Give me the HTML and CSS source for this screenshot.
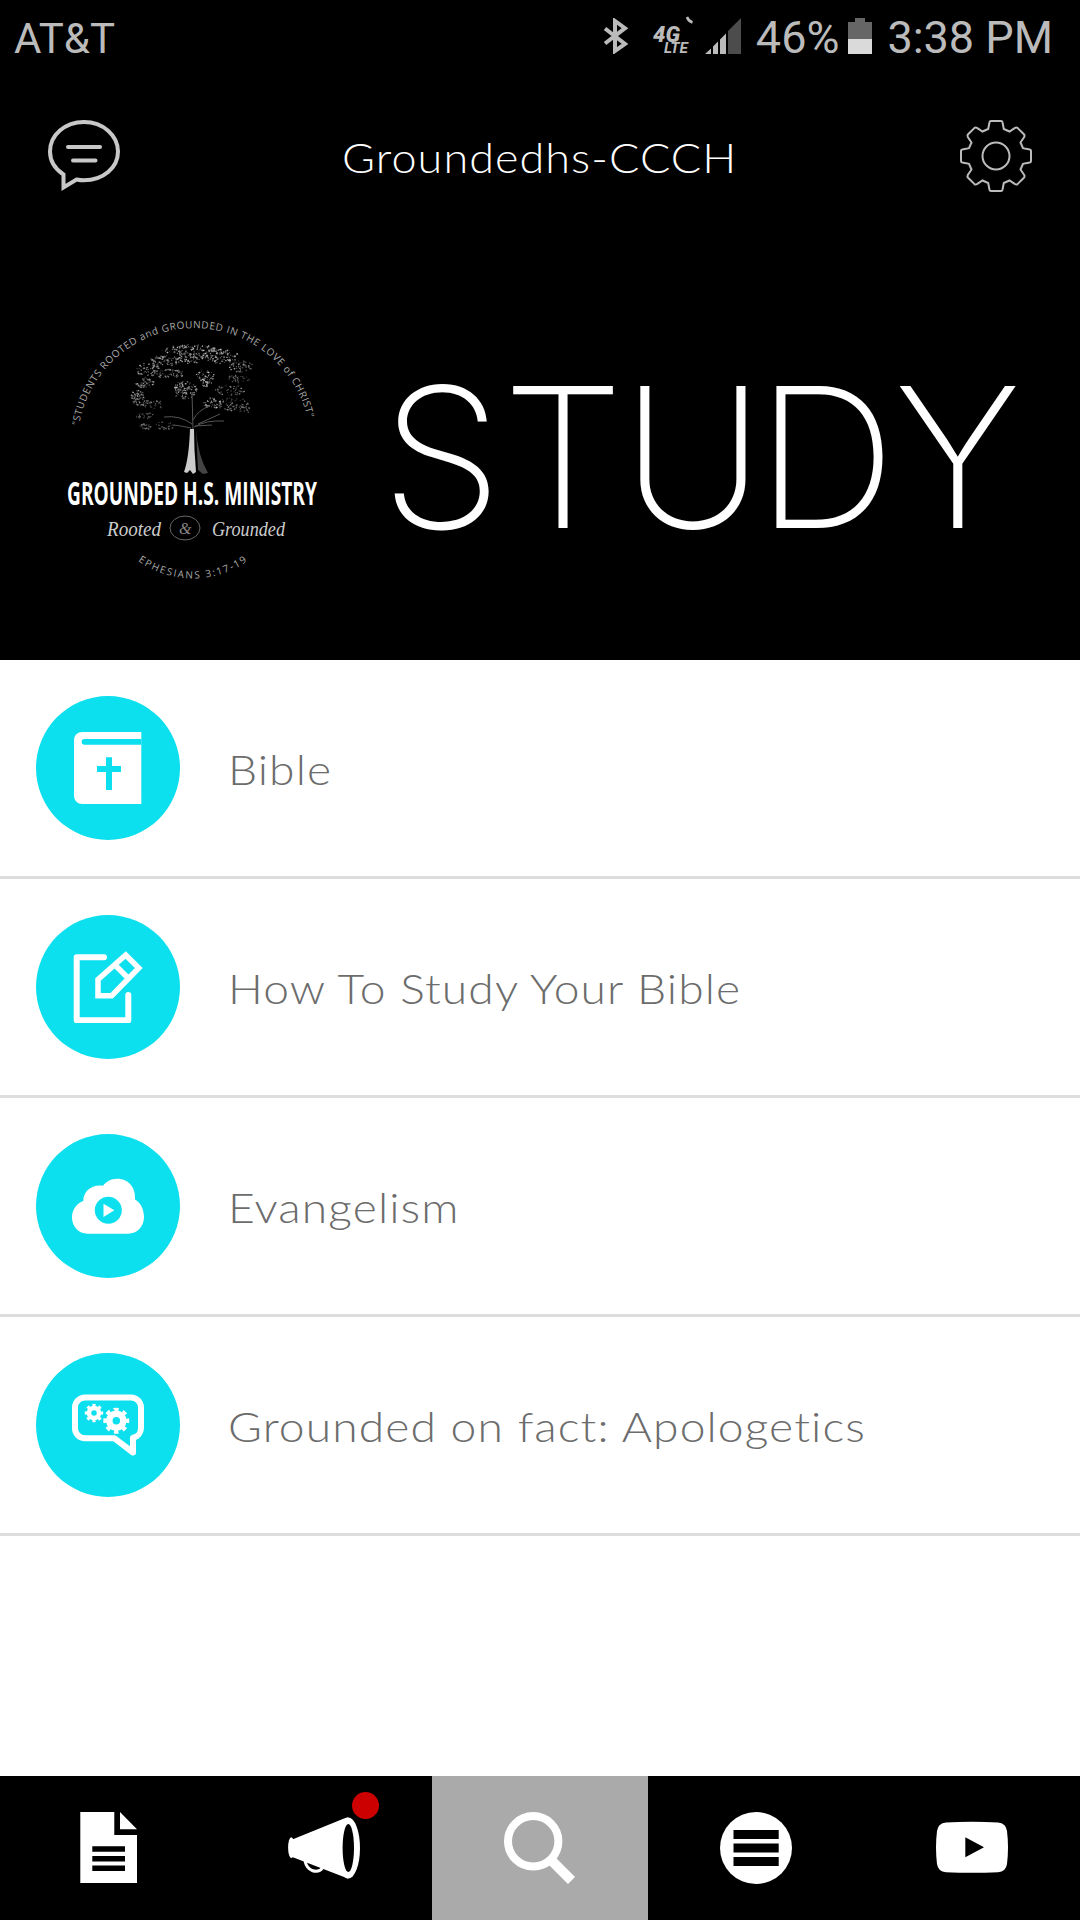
FILE: index.html
```html
<!DOCTYPE html>
<html lang="en">

<head>
    <meta charset="UTF-8">
    <meta name="viewport" content="width=device-width,initial-scale=1">
    <title>Groundedhs-CCCH</title>
    <link rel="stylesheet" href="styles.css">
</head>

<body>
    <div class="wrap">
        <div class="status">
            <span class="carrier">AT&amp;T</span>
            <svg class="bluetooth" width="26" height="36" viewBox="0 0 26 36">
                <path d="M2 10.500L22 26 12 33V3L22 10.200 2 25.500" />
            </svg>
            <svg class="network" width="42" height="40" viewBox="0 0 42 40">
                <text class="net-big" x="0" y="25.5" textLength="27" lengthAdjust="spacingAndGlyphs">4G</text>
                <text class="net-small" x="11" y="37" textLength="24" lengthAdjust="spacingAndGlyphs">LTE</text>
                <path d="M34 1c1 3 2.500 4.500 5.500 5.500" />
            </svg>
            <svg class="signal" width="36" height="36" viewBox="0 0 36 36">
                <path class="dim" d="M23 13L36 0V36H23z" />
                <path d="M0 36L6 30.500V36zM8 28.500L13 23.500V36H8zM15 21.500L21 15.500V36H15z" />
            </svg>
            <span class="percent">46%</span>
            <svg class="battery" width="24" height="36" viewBox="0 0 24 36">
                <path class="dim" d="M7 0H17V4H24V21H0V4H7z" />
                <path d="M0 21H24V36H0z" />
            </svg>
            <span class="time">3:38 PM</span>
        </div>

        <div class="navbar">
            <svg class="nav-icon chat" width="72" height="72" viewBox="0 0 72 72">
                <path d="M36 2C17 2 2 15 2 31.500c0 9.500 5 17.500 13.500 23V67.500l13-8c2.500.5 5 .8 7.500.8 19 0 34-12.500 34-28.800S55 2 36 2z" />
                <path d="M20 27H52M25 40.600H47.500" />
            </svg>
            <h1 class="title">Groundedhs-CCCH</h1>
            <svg class="nav-icon gear" width="72" height="72" viewBox="-36 -36 72 72">
                <defs>
                    <path id="quarter" d="M0-35H5Q6.300-35 6.500-33.800L7.800-27 13.500-24.500 19-28.200Q20.500-29 21.700-27.900L27.900-21.700Q29-20.500 28.200-19L24.500-13.500 27-7.800 33.800-6.500Q35-6.300 35-5V0" />
                </defs>
                <use href="#quarter" />
                <use href="#quarter" transform="rotate(90)" />
                <use href="#quarter" transform="rotate(180)" />
                <use href="#quarter" transform="rotate(270)" />
                <circle r="13.500" />
            </svg>
        </div>

        <div class="banner">
            <svg class="logo" width="300" height="300" viewBox="0 0 300 300">
                <defs>
                    <path id="arc-top" d="M39 126A116.500 116.500 0 0 1 269 126" />
                    <path id="arc-bottom" d="M98 261A95 95 0 0 0 209 260" />
                </defs>
                <text class="ring"><textPath href="#arc-top" textLength="320">"STUDENTS ROOTED and GROUNDED IN THE LOVE of CHRIST"</textPath></text>
                <g id="leaves"></g>
                <g class="branches">
                    <path d="M152 92L153 130M153 120Q158 110 170 106M152 124Q140 115 124 117M154 127Q166 120 184 121M151 128Q142 126 134 125M158 124L180 114M155 126L172 125" />
                </g>
                <path class="trunk" d="M150 129H154L154.500 150 156 172 153 174 150 170 147 173 144 172Q149 158 150 129z" />
                <path class="trunk-shade" d="M156 130Q158 156 168 173L163 174 158 170z" />
                <text class="ministry" x="27" y="205" textLength="250" lengthAdjust="spacingAndGlyphs">GROUNDED H.S. MINISTRY</text>
                <text class="script" x="67" y="236" textLength="54" lengthAdjust="spacingAndGlyphs">Rooted</text>
                <ellipse class="oval" cx="145" cy="228" rx="15" ry="12" />
                <text class="script amp" x="139" y="234">&amp;</text>
                <text class="script" x="172" y="236" textLength="73" lengthAdjust="spacingAndGlyphs">Grounded</text>
                <text class="ring"><textPath href="#arc-bottom" textLength="116">EPHESIANS 3:17-19</textPath></text>
            </svg>
            <svg class="heading" width="660" height="170" viewBox="0 0 660 170">
                <text x="1 122 242 376 514" y="148">STUDY</text>
            </svg>
        </div>

        <ul class="list">
            <li class="row">
                <span class="badge">
                    <svg width="72" height="72" viewBox="0 0 72 72">
                        <path class="fill" d="M10 0H69.300V72H10A8 8 0 0 1 2 64V8A8 8 0 0 1 10 0z" />
                        <path class="cut" d="M69.300 7H12.500a2.850 2.850 0 0 0 0 5.700H69.300zM34 25.300h6V34h9v6h-9v18h-6V40h-9v-6h9z" />
                    </svg>
                </span>
                <p>Bible</p>
            </li>
            <li class="row">
                <span class="badge">
                    <svg width="72" height="72" viewBox="0 0 72 72">
                        <path class="line" d="M32 6.300H4.700V69.300H56.300V44" />
                        <path class="line pencil" d="M53.700 4L66.800 17 39.700 44.700H26V28.500zM43.500 14.500L56 27" />
                    </svg>
                </span>
                <p>How To Study Your Bible</p>
            </li>
            <li class="row">
                <span class="badge">
                    <svg width="72" height="72" viewBox="0 0 72 72">
                        <path class="fill" d="M15.500 63.700C6.500 63.700 0 56.500 0 47.500 0 39.500 4.500 33.500 11.300 31 11.300 21.500 19.500 14 31 15.800 34 11.500 39 8.700 45.300 8.700 56 8.700 64 17 63 29.500 68.500 32.500 72 39 72 47.300 72 56.500 65 63.700 56.300 63.700z" />
                        <circle class="cut" cx="36.300" cy="40.300" r="13.500" />
                        <path class="fill" d="M31.500 33.800L42.300 40.300 31.500 47z" />
                    </svg>
                </span>
                <p>Evangelism</p>
            </li>
            <li class="row">
                <span class="badge">
                    <svg width="72" height="72" viewBox="0 0 72 72">
                        <path class="line" d="M13 8.500H59a10 10 0 0 1 10 10V39a10 10 0 0 1-8 9.800V63.500L42.500 49.300H13a10 10 0 0 1-10-10V18.500a10 10 0 0 1 10-10z" />
                        <g class="cog" transform="translate(22 24)">
                            <circle r="5" stroke-width="4.500" />
                            <circle r="7.500" stroke-width="3.500" pathLength="16" stroke-dasharray="1" transform="rotate(-11)" />
                        </g>
                        <g class="cog" transform="translate(44.300 31.700)">
                            <circle r="7" stroke-width="6.500" />
                            <circle r="11" stroke-width="4" pathLength="16" stroke-dasharray="1" transform="rotate(-11)" />
                        </g>
                    </svg>
                </span>
                <p>Grounded on fact: Apologetics</p>
            </li>
        </ul>

        <div class="tabs">
            <div class="tab">
                <svg width="72" height="72" viewBox="0 0 72 72">
                    <path d="M8.300 0H42.300V23H65V71H8.300zM48 0L65 17.300H48z" />
                    <path class="ink" d="M20.300 34.300H53v5.400H20.300zM20.300 44H53v5.400H20.300zM20.300 53.500H53v5.400H20.300z" />
                </svg>
            </div>
            <div class="tab">
                <svg width="72" height="72" viewBox="0 0 72 72">
                    <ellipse cx="3.300" cy="35.700" rx="3.200" ry="10.500" />
                    <path d="M3 27.500L5.500 27 56 6.500 60 5.200V66.700L56 65 5.500 45.500 3 45z" />
                    <ellipse cx="60.300" cy="36" rx="11.700" ry="30.500" />
                    <ellipse class="ink" cx="60.300" cy="36" rx="5.700" ry="24" />
                    <path class="handle" d="M17 49Q18.500 56 24 58.500 31 61 34.500 56" />
                </svg>
                <span class="dot"></span>
            </div>
            <div class="tab active">
                <svg width="72" height="72" viewBox="0 0 72 72">
                    <circle class="lens" cx="29.200" cy="29.300" r="25.200" />
                    <path class="stick" d="M46 47L67.500 68.500" />
                </svg>
            </div>
            <div class="tab">
                <svg width="72" height="72" viewBox="0 0 72 72">
                    <circle cx="36" cy="36" r="36" />
                    <path class="ink" d="M13.500 18H58.700v9H13.500zM13.500 31.500H58.700v9H13.500zM13.500 45H58.700v9H13.500z" />
                </svg>
            </div>
            <div class="tab">
                <svg width="72" height="72" viewBox="0 0 72 72">
                    <path d="M10 10.500Q36 9 62 10.500 70 11 71 19 73 35.500 71 52 70 59.500 62 60.200 36 61.500 10 60.200 2 59.500 1 52-1 35.500 1 19 2 11 10 10.500z" />
                    <path class="ink" d="M29.300 25.300L48 35.300 29.300 45.300z" />
                </svg>
            </div>
        </div>
    </div>
    <script src="tree.js"></script>
</body>

</html>
```
FILE: styles.css
```css
* {
    padding: 0;
    margin: 0;
    list-style: none;
    box-sizing: border-box;
}

body {
    background: #fff;
    font-family: Lato, "Liberation Sans", sans-serif;
}

.wrap {
    width: 1080px;
    height: 1920px;
    display: flex;
    flex-direction: column;
    overflow: hidden;
}

/* status bar */
.status {
    height: 72px;
    padding: 0 27px 0 14px;
    display: flex;
    align-items: center;
    background: #000;
    color: #bbb;
    font-family: Roboto, sans-serif;
    font-size: 45px;
    white-space: nowrap;
}

.status svg {
    flex: none;
    fill: #bbb;
}

.carrier {
    flex: 1;
    font-size: 42px;
    padding-top: 4px;
}

.percent,
.time {
    padding-top: 3px;
}

.status .bluetooth {
    margin-right: 24px;
    fill: none;
    stroke: #bbb;
    stroke-width: 4;
}

.network {
    margin-right: 10px;
}

.net-big,
.net-small {
    font-family: Roboto, sans-serif;
    font-style: italic;
    font-weight: 900;
    font-size: 22px;
}

.net-small {
    font-size: 15px;
    font-weight: 700;
}

.network path {
    fill: none;
    stroke: #bbb;
    stroke-width: 2.5;
}

.signal {
    margin-right: 15px;
}

.status .dim {
    fill: #4c4c4c;
}

.status .battery {
    margin: 0 15px 0 9px;
    fill: #dadada;
}

.battery .dim {
    fill: #666;
}

/* title bar */
.navbar {
    height: 168px;
    padding: 0 48px;
    display: flex;
    align-items: center;
    justify-content: space-between;
    background: #000;
}

.nav-icon {
    fill: none;
    stroke: #bbb;
    stroke-width: 2;
}

.chat {
    stroke: #c8c8c8;
    stroke-width: 4;
    stroke-linecap: round;
}

.title {
    padding-top: 2px;
    color: #fff;
    font-size: 42px;
    font-weight: 300;
    letter-spacing: 1px;
    transform: scaleX(1.07);
}

/* banner */
.banner {
    height: 420px;
    padding: 60px 0 0 40px;
    display: flex;
    background: #000;
}

.logo,
.heading {
    flex: none;
    overflow: visible;
}

.ring {
    fill: #aaa;
    font-family: "Open Sans", sans-serif;
    font-size: 10px;
}

#leaves path {
    stroke-width: 1.3;
}

.branches {
    fill: none;
    stroke: #555;
    stroke-width: 1;
}

.trunk {
    fill: #ccc;
}

.trunk-shade {
    fill: #444;
}

.ministry {
    fill: #fff;
    font-family: "Open Sans", sans-serif;
    font-weight: 700;
    font-size: 33px;
}

.script {
    fill: #ccc;
    font-family: "Liberation Serif", serif;
    font-style: italic;
    font-size: 22px;
}

.amp {
    fill: #888;
    font-size: 16px;
}

.oval {
    fill: none;
    stroke: #666;
}

.heading {
    margin-left: 40px;
    margin-top: 80px;
}

.heading text {
    fill: #fff;
    font-family: Inter, sans-serif;
    font-weight: 200;
    font-size: 195px;
}

/* list */
.list {
    flex: 1;
}

.row {
    height: 219px;
    padding-left: 36px;
    display: flex;
    align-items: center;
    border-bottom: 3px solid #ddd;
}

.badge {
    width: 144px;
    height: 144px;
    border-radius: 72px;
    background: #0cdfed;
    display: flex;
    align-items: center;
    justify-content: center;
}

.row p {
    margin-left: 48px;
    padding-top: 2px;
    color: #6c6c6c;
    font-size: 42px;
    font-weight: 300;
    letter-spacing: 1px;
    transform: scaleX(1.1);
    transform-origin: left;
}

.fill {
    fill: #fff;
}

.cut {
    fill: #0cdfed;
}

.line {
    fill: none;
    stroke: #fff;
    stroke-width: 6;
    stroke-linecap: round;
    stroke-linejoin: round;
}

.pencil {
    stroke-width: 5.5;
    stroke-linejoin: miter;
}

.cog {
    fill: none;
    stroke: #fff;
}

/* bottom tabs */
.tabs {
    height: 144px;
    display: flex;
    background: #000;
}

.tab {
    flex: 1;
    display: flex;
    align-items: center;
    justify-content: center;
    position: relative;
    fill: #fff;
}

.active {
    background: #aaa;
}

.ink {
    fill: #000;
}

.lens,
.stick,
.handle {
    fill: none;
    stroke: #fff;
    stroke-width: 8;
}

.stick {
    stroke-width: 10;
}

.handle {
    stroke-width: 3;
}

.dot {
    position: absolute;
    left: 136px;
    top: 16px;
    width: 27px;
    height: 27px;
    border-radius: 50%;
    background: #c00;
}
```
FILE: tree.js
```js
// leaf clusters: x, y, half width, half height, strokes, grey
var clusters = [
    [150, 50, 28, 5, 110, 170],
    [125, 61, 16, 5, 75, 160],
    [108, 70, 12, 7, 60, 150],
    [150, 58, 12, 6, 60, 180],
    [180, 56, 18, 7, 100, 170],
    [200, 67, 12, 6, 55, 150],
    [130, 74, 14, 5, 50, 150],
    [165, 76, 9, 6, 40, 170],
    [167, 84, 5, 3, 18, 190],
    [104, 83, 9, 5, 50, 150],
    [98, 97, 7, 8, 60, 150],
    [112, 104, 12, 4, 35, 120],
    [145, 90, 12, 9, 100, 170],
    [198, 79, 12, 4, 35, 110],
    [190, 90, 14, 6, 50, 120],
    [192, 104, 16, 6, 55, 120],
    [172, 104, 8, 6, 45, 170],
    [106, 116, 10, 3, 30, 110],
    [105, 126, 5, 3, 25, 110],
    [124, 126, 10, 4, 25, 110],
    [204, 109, 6, 4, 20, 120]
];

var seed = 7;

function rand() {
    seed = (seed * 16807) % 2147483647;
    return seed / 2147483647;
}

var leaves = document.getElementById('leaves');
clusters.forEach(function(c) {
    for (var i = 0; i < c[4]; i++) {
        var a = rand() * Math.PI * 2,
            r = Math.sqrt(rand()),
            x = c[0] + Math.cos(a) * r * c[2],
            y = c[1] + Math.sin(a) * r * c[3],
            g = Math.round(c[5] * (0.4 + rand() * 0.8));
        var leaf = document.createElementNS('http://www.w3.org/2000/svg', 'path');
        leaf.setAttribute('d', 'M' + x.toFixed(1) + ' ' + y.toFixed(1) + 'l' + (rand() * 3 - 1).toFixed(1) + ' ' + (rand() * 2 - 1).toFixed(1));
        leaf.setAttribute('stroke', 'rgb(' + g + ',' + g + ',' + g + ')');
        leaves.appendChild(leaf);
    }
});
```
